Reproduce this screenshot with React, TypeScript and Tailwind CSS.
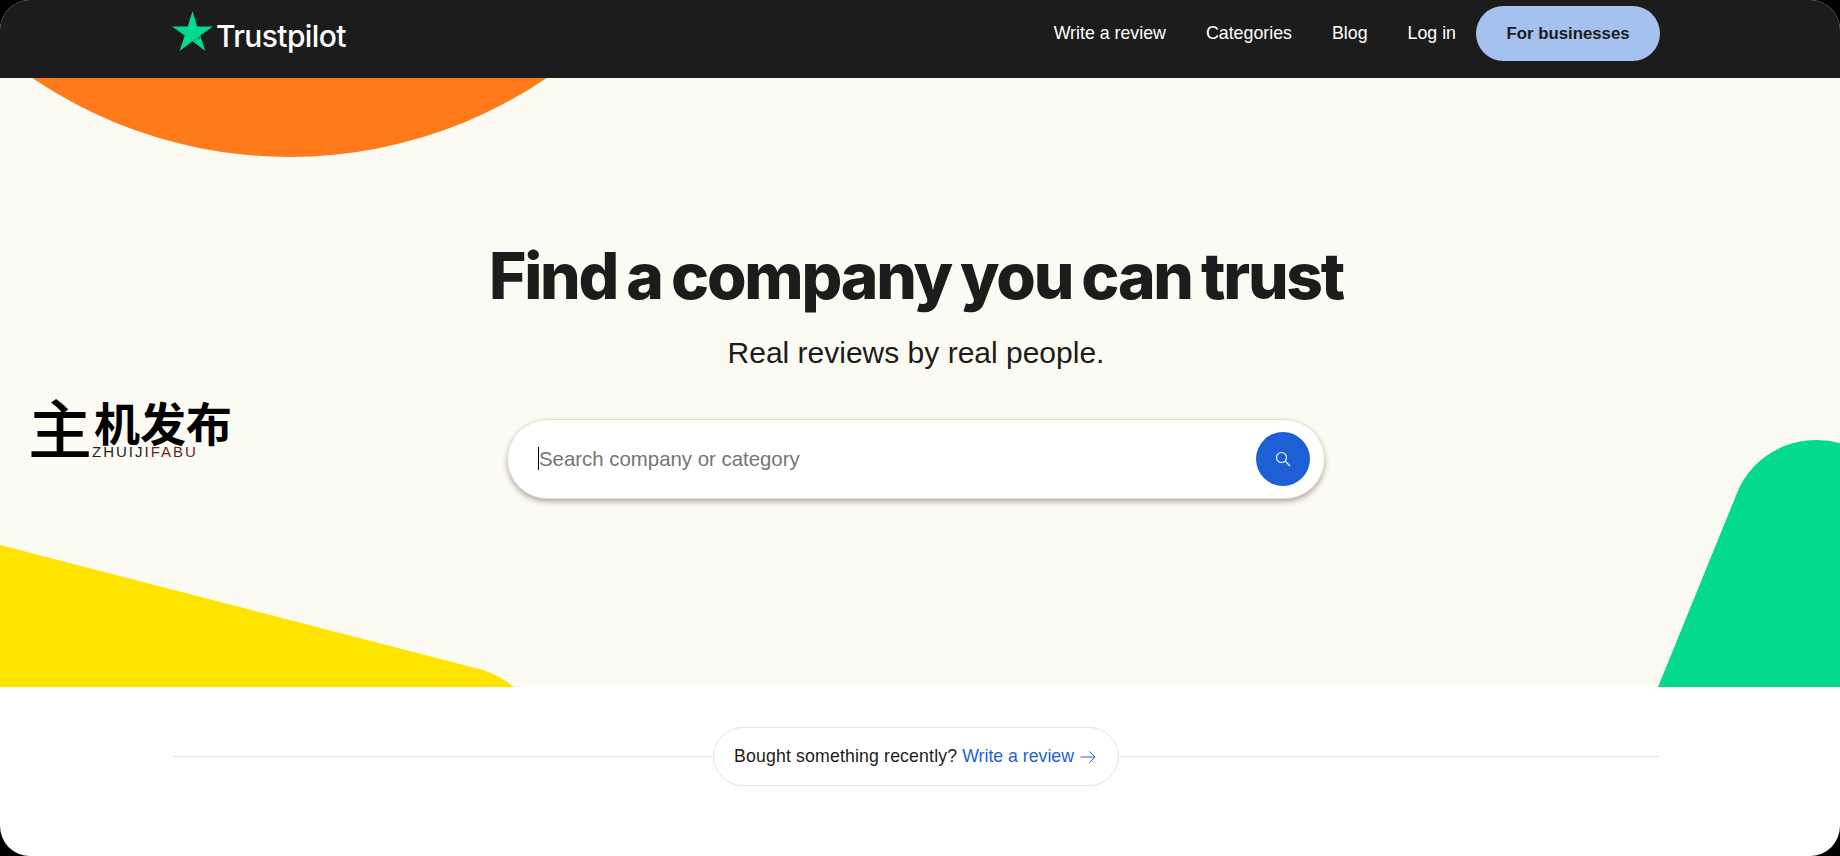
import React from "react";

const nav = "font-['Liberation_Sans',sans-serif] text-[17.8px] text-white whitespace-nowrap";

function Star() {
  return (
    <svg width="41" height="40" viewBox="0 0 40 39" className="block shrink-0">
      <polygon fill="#04da8d" points="20,0 24.6,15 40,15 27.6,24 32.4,39 20,29.6 7.4,39 12.4,24 0,15 15.4,15" />
      <polygon fill="#00a86b" points="27.6,24 28.6,27.2 20,29.6" />
    </svg>
  );
}

export default function App() {
  return (
    <div className="h-[856px] w-[1840px] bg-black overflow-hidden">
      <div className="relative h-[856px] w-[1840px] rounded-[30px] overflow-hidden bg-white flex flex-col pr-[8px]">
        <header className="relative z-10 -mr-[8px] h-[78px] shrink-0 bg-[#1c1c1c] pr-[8px] pb-[11px]">
          <div className="mx-auto flex h-full w-[1488px] items-center justify-between">
            <div className="flex items-start gap-[3px] pb-[6px]">
              <Star />
              <span className="mt-[10px] font-['Inter',sans-serif] text-[30px] font-medium leading-[30px] tracking-[-0.6px] text-white">Trustpilot</span>
            </div>
            <nav className="flex items-center">
              <a className={nav + " mr-[40px]"}>Write a review</a>
              <a className={nav + " mr-[40px]"}>Categories</a>
              <a className={nav + " mr-[40px]"}>Blog</a>
              <a className={nav + " mr-[20px]"}>Log in</a>
              <a className="flex h-[55px] w-[184px] items-center justify-center rounded-full bg-[#a5c1ee] font-['Liberation_Sans',sans-serif] text-[16.8px] font-bold text-[#1c1c1c] whitespace-nowrap">For businesses</a>
            </nav>
          </div>
        </header>

        <section className="relative -mr-[8px] h-[609px] shrink-0 overflow-hidden bg-[#fcfbf3] pr-[8px]">
          <div className="absolute left-[-168px] top-[-836px] h-[915px] w-[915px] rounded-full bg-[#ff7a1a]" />
          <svg className="absolute left-0 top-[467px] block" width="514" height="142" viewBox="0 0 514 142">
            <path fill="#ffe400" d="M0 0 L483 125 Q499 130 514 142 L0 142 Z" />
          </svg>
          <svg className="absolute right-0 top-[362px] block" width="182" height="247" viewBox="0 0 182 247">
            <path fill="#04da8d" d="M0 247 L79 53 C91 22 122 0 159 0 Q171 0 182 3 L182 247 Z" />
          </svg>

          <div className="absolute left-[28px] top-[315px] h-[76px] w-[204px]">
            <div className="flex items-start font-['Noto_Sans_CJK_SC',sans-serif] text-black">
              <span className="text-[64px] font-medium leading-[64px]">主</span>
              <span className="ml-[2px] mt-[5px] text-[46px] font-bold leading-[46px]">机发布</span>
            </div>
            <div className="absolute left-[64px] top-[53px] font-['Liberation_Sans',sans-serif] text-[15px] leading-[12px] tracking-[2px] whitespace-nowrap">
              <span className="text-[#222222]">ZHUIJI</span><span className="text-[#6b1f1f]">FABU</span>
            </div>
          </div>

          <div className="relative mx-auto flex w-[1488px] flex-col items-center pt-[162px]">
            <h1 className="font-['Inter',sans-serif] text-[64px] font-extrabold leading-[72px] tracking-[-2.2px] [word-spacing:-2.6px] text-[#1c1c1c] whitespace-nowrap">Find a company you can trust</h1>
            <p className="mt-[23px] font-['Liberation_Sans',sans-serif] text-[30px] leading-[36px] text-[#1c1c1c] whitespace-nowrap">Real reviews by real people.</p>
            <div className="mt-[48px] flex h-[80px] w-[818px] items-center justify-between rounded-full border border-[#dfddd3] bg-white pl-[30px] pr-[14px] shadow-[0_3px_5px_rgba(90,85,70,0.45)]">
              <div className="flex items-center">
                <span className="h-[23px] w-px bg-black" />
                <span className="font-['Liberation_Sans',sans-serif] text-[20.4px] text-[#757575] whitespace-nowrap">Search company or category</span>
              </div>
              <button className="flex h-[54px] w-[54px] items-center justify-center rounded-full bg-[#1f5fd6]">
                <svg width="16" height="16" viewBox="0 0 16 16" fill="none" stroke="#fff" strokeWidth="1.1">
                  <circle cx="6.5" cy="6.5" r="5" />
                  <path d="M10.2 10.2 L15 15" />
                </svg>
              </button>
            </div>
          </div>
        </section>

        <section className="flex-1">
          <div className="mx-auto mt-[40px] flex w-[1488px] items-center">
            <div className="h-px flex-1 bg-[#e5e5dd]" />
            <div className="flex h-[59px] w-[406px] items-center justify-center rounded-full border border-[#e5e5dd] bg-white pr-[2px] font-['Liberation_Sans',sans-serif] text-[17.7px] whitespace-nowrap">
              <span className="tracking-[0.15px] text-[#1c1c1c]">Bought something recently?</span>
              <span className="ml-[5px] text-[#1f5fd6]">Write a review</span>
              <svg className="ml-[6px]" width="16" height="14" viewBox="0 0 16 14" fill="none" stroke="#1f5fd6" strokeWidth="1">
                <path d="M0.5 7 H15 M9.5 1.5 L15 7 L9.5 12.5" />
              </svg>
            </div>
            <div className="h-px flex-1 bg-[#e5e5dd]" />
          </div>
        </section>
      </div>
    </div>
  );
}
